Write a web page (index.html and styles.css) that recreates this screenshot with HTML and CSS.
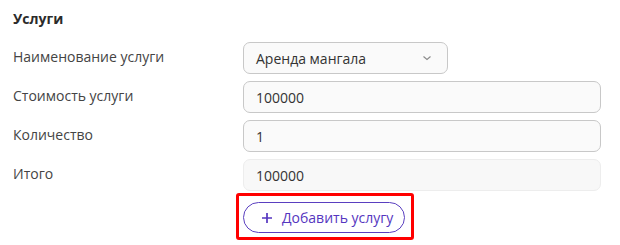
FILE: index.html
```html
<!DOCTYPE html>
<html>
<head>
    <meta charset="UTF-8">
    <title>Услуги</title>
    <link rel="stylesheet" href="styles.css">
</head>
<body>

<div id="services">
    <h3 class="title">Услуги</h3>
    <div class="row">
        <label>Наименование услуги</label>
        <div class="select">
            <span>Аренда мангала</span>
            <svg width="10" height="6" viewBox="0 0 10 6"><path d="M1.5 1.5 L5 4.5 L8.5 1.5" fill="none" stroke="#8a8a8a" stroke-width="1.1"/></svg>
        </div>
    </div>
    <div class="row">
        <label>Стоимость услуги</label>
        <input class="field" type="text" value="100000">
    </div>
    <div class="row">
        <label>Количество</label>
        <input class="field" type="text" value="1">
    </div>
    <div class="row">
        <label>Итого</label>
        <input class="field" type="text" value="100000" disabled>
    </div>
    <div class="row">
        <span></span>
        <div class="actions">
            <div class="highlight">
                <a href="javascript:;" class="add"><svg class="plus" width="10" height="10" viewBox="0 0 10 10"><path d="M5 0 V10 M0 5 H10" stroke="#5536c0" stroke-width="1.7"/></svg>Добавить услугу</a>
            </div>
        </div>
    </div>
</div>
</body>
</html>
```

FILE: styles.css
```css
body,div,h3,label{margin:0;padding:0;}
body {
    font-family: "Open Sans", "Noto Sans", sans-serif;
    font-size: 14px;
    color: #333;
    background: #fff;
}
#services {
    padding: 9px 19px 0 13px;
}
.title {
    font-size: 14px;
    font-weight: bold;
    color: #2b2b2b;
    line-height: 19px;
    margin-bottom: 14px;
}
.row {
    display: grid;
    grid-template-columns: 230px 1fr;
    align-items: center;
    margin-bottom: 7px;
}
.row label {
    color: #444;
    line-height: 19px;
    margin-top: -3px;
}
.select {
    width: 205px;
    height: 32px;
    box-sizing: border-box;
    border: 1px solid #c8c8c8;
    border-radius: 7px;
    background: #fafafa;
    display: flex;
    align-items: center;
    justify-content: space-between;
    padding: 0 15px 0 12px;
}
.field {
    display: block;
    width: 100%;
    height: 32px;
    box-sizing: border-box;
    border: 1px solid #c8c8c8;
    border-radius: 7px;
    background: #fafafa;
    padding: 0 12px;
    font-family: inherit;
    font-size: 14px;
    color: #333;
    outline: none;
}
.field:disabled {
    border-color: #ededed;
    background: #f8f8f8;
    color: #333;
}
.actions {
    margin-left: -7px;
    margin-top: -5px;
}
.highlight {
    display: inline-block;
    border: 3px solid #f00;
    border-radius: 3px;
    padding: 6px 6px 4px 4px;
}
.add {
    display: flex;
    align-items: center;
    height: 31px;
    box-sizing: border-box;
    padding: 0 11px 0 18px;
    border: 1px solid #5a3fc0;
    border-radius: 16px;
    color: #5536c0;
    text-decoration: none;
    font-size: 14px;
}
.plus {
    margin-right: 10px;
}
```
